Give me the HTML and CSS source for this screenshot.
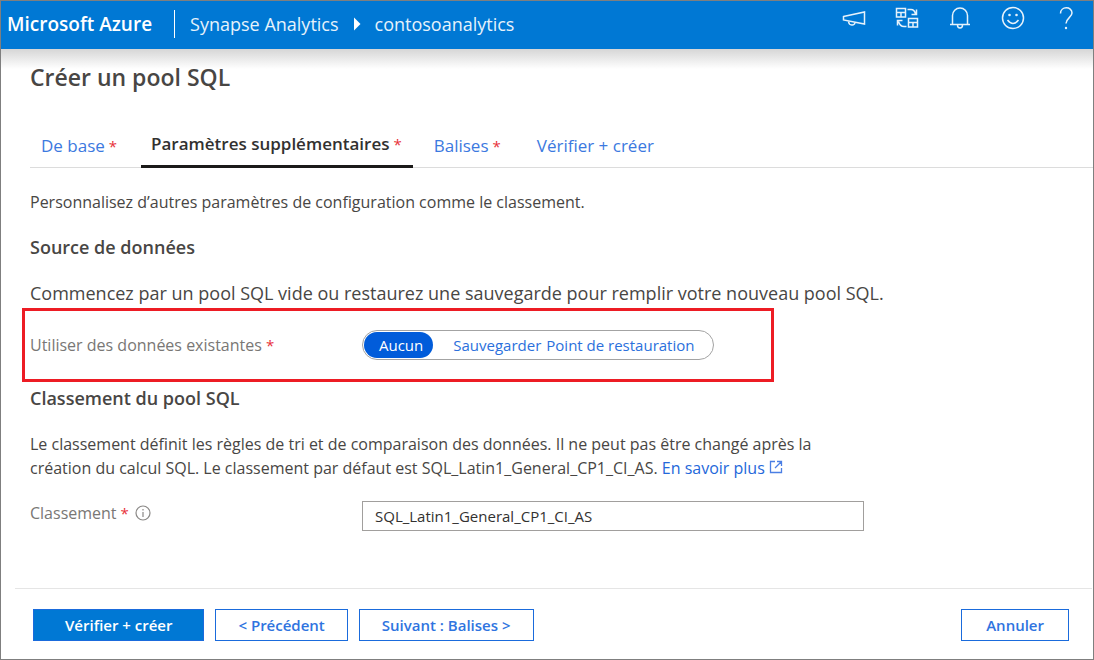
FILE: index.html
```html
<!DOCTYPE html>
<html lang="fr">
<head>
<meta charset="utf-8">
<meta name="viewport" content="width=device-width, initial-scale=1">
<title>Créer un pool SQL - Microsoft Azure</title>
<link rel="stylesheet" href="styles.css">
</head>
<body>
<div class="portal">
  <header class="topbar">
    <span class="brand">Microsoft Azure</span>
    <nav class="crumbs" aria-label="Fil d'Ariane">
      <a class="crumb" href="#">Synapse Analytics</a>
      <svg class="crumb-arrow" width="8" height="14" viewBox="0 0 8 14" aria-hidden="true"><path d="M1 0.500L7.500 7L1 13.500z" fill="#fff"/></svg>
      <a class="crumb" href="#">contosoanalytics</a>
    </nav>
    <div class="tools">
      <button class="tool" type="button" aria-label="Annonces">
        <svg width="24" height="24" viewBox="0 0 24 24"><path d="M1.500 10.500L22.500 6v12L1.500 14z"/><path d="M6.500 15.500c.5 4.500 6 4.500 6.500 1"/></svg>
      </button>
      <button class="tool" type="button" aria-label="Changer d'annuaire">
        <svg width="24" height="24" viewBox="0 0 24 24"><path d="M1.500 2.500h9v8.500h-9zM1.500 6.500h9M6 6.500v4.500M13.500 12.500h9v8.500h-9zM13.500 16.500h9M18 16.500v4.500"/><path d="M12.500 3.500h3.500q3.500 0 4.500 4.500M21.500 3.500v5h-5M11.500 20.500h-2.500q-4 0-5.500-5M2.500 19.500v-5h5"/></svg>
      </button>
      <button class="tool" type="button" aria-label="Notifications">
        <svg width="24" height="24" viewBox="0 0 24 24"><path d="M4.500 18V9.500a7.500 7.500 0 0 1 15 0V18M2 18.500h20M9.500 19a2.500 3 0 0 0 5 0"/></svg>
      </button>
      <button class="tool" type="button" aria-label="Commentaires">
        <svg width="24" height="24" viewBox="0 0 24 24"><circle cx="12" cy="12" r="10.500"/><path d="M6.500 14q5.500 7 11 0"/><circle class="dot" cx="8.500" cy="9" r="1.300"/><circle class="dot" cx="15.500" cy="9" r="1.300"/></svg>
      </button>
      <button class="tool" type="button" aria-label="Aide">
        <svg width="24" height="24" viewBox="0 0 24 24"><path d="M6.500 7.500C6.500 0 18 0 18 7c0 4-6 5.500-6 10.500"/><circle class="dot" cx="12" cy="22" r="1.200"/></svg>
      </button>
    </div>
  </header>

  <main class="content">
    <h1 class="title">Créer un pool SQL</h1>

    <div class="tabs" role="tablist">
      <button class="tab" type="button" role="tab" aria-selected="false">De base<span class="star">*</span></button>
      <button class="tab tab-active" type="button" role="tab" aria-selected="true">Paramètres supplémentaires<span class="star">*</span></button>
      <button class="tab" type="button" role="tab" aria-selected="false">Balises<span class="star">*</span></button>
      <button class="tab tab-last" type="button" role="tab" aria-selected="false">Vérifier + créer</button>
    </div>

    <p class="text intro">Personnalisez d’autres paramètres de configuration comme le classement.</p>

    <section>
      <h2 class="heading">Source de données</h2>
      <p class="text text-large">Commencez par un pool SQL vide ou restaurez une sauvegarde pour remplir votre nouveau pool SQL.</p>
      <div class="highlight" role="radiogroup" aria-labelledby="source-label">
        <span class="label" id="source-label">Utiliser des données existantes<span class="star">*</span></span>
        <div class="switch">
          <input class="switch-input" type="radio" name="source" id="none" checked>
          <label class="switch-option" for="none">Aucun</label>
          <input class="switch-input" type="radio" name="source" id="backup">
          <label class="switch-option" for="backup">Sauvegarder</label>
          <input class="switch-input" type="radio" name="source" id="restore">
          <label class="switch-option" for="restore">Point de restauration</label>
        </div>
      </div>
    </section>

    <section>
      <h2 class="heading">Classement du pool SQL</h2>
      <p class="text collation-text">Le classement définit les règles de tri et de comparaison des données. Il ne peut pas être changé après la création du calcul SQL. Le classement par défaut est SQL_Latin1_General_CP1_CI_AS. <a class="link" href="#">En savoir plus<svg class="external" width="14" height="14" viewBox="0 0 14 14" aria-hidden="true"><path d="M6 1.500H1.500v11h11V8M8 1.500h4.500V6M12.500 1.500L6 8"/></svg></a></p>
      <div class="field">
        <div class="label-group">
          <label class="label" for="collation">Classement<span class="star">*</span></label>
          <svg class="info" width="16" height="16" viewBox="0 0 16 16" aria-hidden="true"><circle cx="8" cy="8" r="7"/><path d="M8 7v5M8 4v1.500"/></svg>
        </div>
        <input class="input" id="collation" type="text" value="SQL_Latin1_General_CP1_CI_AS">
      </div>
    </section>
  </main>

  <footer class="actions">
    <button class="button button-primary" type="button">Vérifier + créer</button>
    <button class="button" type="button">&lt; Précédent</button>
    <button class="button" type="button">Suivant : Balises &gt;</button>
    <button class="button button-cancel" type="button">Annuler</button>
  </footer>
</div>
</body>
</html>
```

FILE: styles.css
```css
* {
  box-sizing: border-box;
}

body {
  margin: 0;
  background: #fff;
  color: #484644;
  font-family: "Open Sans", "Noto Sans", sans-serif;
  font-size: 16px;
  line-height: 24px;
}

button,
input {
  font: inherit;
}

a {
  text-decoration: none;
}

.portal {
  display: flex;
  flex-direction: column;
  min-height: 100vh;
  border: 1px solid #7f7f7f;
}

.topbar {
  display: flex;
  align-items: center;
  height: 48px;
  padding: 0 15px 3px 6px;
  background: #0078d4;
  color: #fff;
}

.brand {
  padding-right: 22px;
  border-right: 1px solid #fff;
  font-size: 19px;
  font-weight: 600;
  line-height: 28px;
}

.crumbs {
  display: flex;
  align-items: center;
  gap: 14px;
  padding-left: 15px;
}

.crumb {
  color: #e6f2fb;
  font-size: 18px;
}

.tools {
  display: flex;
  gap: 29px;
  margin-left: auto;
  padding-bottom: 11px;
}

.tool {
  display: flex;
  padding: 0;
  border: 0;
  background: none;
}

.tool svg {
  fill: none;
  stroke: #e6f2fb;
  stroke-width: 1.500;
}

.tool .dot {
  fill: #e6f2fb;
  stroke: none;
}

.content {
  padding: 12px 0 24px 29px;
  background: linear-gradient(#d6d6d6, #fff 20px);
}

.title {
  margin: 0;
  font-size: 23px;
  font-weight: 600;
  line-height: 32px;
}

.tabs {
  display: flex;
  margin-top: 33px;
  border-bottom: 1px solid #dcdcdc;
}

.tab {
  padding: 8px 11px 9px;
  border: 0;
  background: none;
  color: #3b79e0;
  font-size: 17px;
  line-height: 24px;
}

.tab-active {
  margin: 0 10px -1px 13px;
  padding: 6px 11px 9px 10px;
  border-bottom: 3px solid #1b1a19;
  color: #323130;
  font-weight: 600;
}

.tab-last {
  margin-left: 14px;
}

.star {
  margin-left: 4px;
  color: #e8303a;
  font-size: 15px;
  font-weight: 400;
}

.text {
  margin: 0;
}

.intro {
  margin-top: 22px;
}

.heading {
  margin: 21px 0 0;
  font-size: 18px;
  font-weight: 600;
  line-height: 24px;
}

.text-large {
  margin-top: 22px;
  font-size: 18px;
}

.highlight {
  display: flex;
  align-items: center;
  max-width: 752px;
  height: 74px;
  margin: 3px 0 -17px -8px;
  padding-left: 5px;
  border: 3px solid #ed1c24;
}

.highlight .label {
  flex: 0 0 332px;
}

.label {
  color: #797775;
}

.switch {
  display: flex;
  align-items: center;
  height: 30px;
  padding: 0 19px 0 1px;
  border: 1px solid #a3a3a3;
  border-radius: 15px;
  font-size: 15px;
}

.switch-input {
  position: absolute;
  opacity: 0;
  pointer-events: none;
}

.switch-option {
  margin-right: 5px;
  color: #2b70dc;
  line-height: 26px;
}

.switch-option:last-child {
  margin-right: 0;
}

.switch-input:checked + .switch-option {
  margin-right: 20px;
  padding: 0 10px 0 15px;
  border-radius: 13px;
  background: #015cda;
  color: #fff;
}

.collation-text {
  max-width: 820px;
  margin-top: 22px;
}

.link {
  color: #2468da;
}

.external {
  margin-left: 4px;
  fill: none;
  stroke: #4b7fe4;
  stroke-width: 1.300;
}

.field {
  display: flex;
  align-items: flex-start;
  margin-top: 21px;
}

.label-group {
  display: flex;
  flex: 0 0 332px;
  align-items: center;
  gap: 6px;
}

.info {
  fill: none;
  stroke: #8a8886;
  stroke-width: 1.200;
}

.input {
  flex: 0 1 502px;
  min-width: 0;
  height: 30px;
  padding: 0 12px;
  border: 1px solid #a19f9d;
  background: #fff;
  color: #323130;
  font-size: 15px;
}

.actions {
  display: flex;
  gap: 11px;
  margin: auto 1px 0 14px;
  padding: 20px 23px 18px 18px;
  border-top: 1px solid #e5e5e5;
}

.button {
  height: 32px;
  padding: 0 22px;
  border: 1px solid #1a6bdc;
  background: #fff;
  color: #2f74df;
  font-size: 15px;
  font-weight: 600;
}

.button-primary {
  padding: 0 31px;
  background: #0078d4;
  color: #fff;
}

.button-cancel {
  margin-left: auto;
  padding: 0 24px;
}
```
